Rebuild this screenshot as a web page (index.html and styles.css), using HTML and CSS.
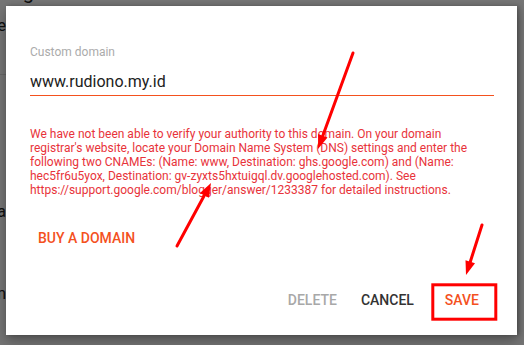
FILE: index.html
```html
<!DOCTYPE html>
<html lang="en">
<head>
    <meta charset="UTF-8">
    <meta name="viewport" content="width=device-width, initial-scale=1.0">
    <title>Custom domain</title>
    <link rel="stylesheet" href="styles.css">
</head>
<body>

    <!-- Page behind the overlay (only edges show) -->
    <div class="page">
        <div class="page-title">Blog</div>
        <div class="page-row page-row-first"><span>Use</span></div>
        <div class="page-rule"></div>
        <div class="page-row page-row-mid"><span>Tea</span></div>
        <div class="page-row page-row-last"><span>Plan</span></div>
    </div>

    <div class="scrim"></div>

    <!-- Dialog -->
    <div class="dialog">
        <div class="field">
            <label class="field-label" for="domain">Custom domain</label>
            <input class="field-input" id="domain" type="text" value="www.rudiono.my.id">
        </div>

        <p class="error-text">We have not been able to verify your authority to this domain. On your domain registrar's website, locate your Domain Name System (DNS) settings and enter the following two CNAMEs: (Name: www, Destination: ghs.google.com) and (Name: hec5fr6u5yox, Destination: gv-zyxts5hxtuigql.dv.googlehosted.com). See https://support.google.com/blogger/answer/1233387 for detailed instructions.</p>

        <div class="buy-row">
            <button class="btn btn-accent">Buy a domain</button>
        </div>

        <div class="actions">
            <button class="btn btn-disabled">Delete</button>
            <button class="btn btn-plain">Cancel</button>
            <button class="btn btn-accent btn-save">Save</button>
        </div>
    </div>

    <!-- Annotation arrows -->
    <svg class="marks" width="524" height="345" viewBox="0 0 524 345">
        <g stroke="#ff0000" stroke-width="3" stroke-linecap="round" fill="none">
            <line x1="353" y1="53" x2="322.8" y2="135.8"/>
            <line x1="177" y1="246" x2="204.4" y2="195.3"/>
            <line x1="482" y1="225" x2="470.3" y2="261.7"/>
            <rect x="432.8" y="284.8" width="63" height="34.4" stroke-linecap="butt"/>
        </g>
        <g fill="#ff0000">
            <polygon points="318,149 327.5,137.5 318.1,134.1"/>
            <polygon points="211,183 208.8,197.7 200,192.9"/>
            <polygon points="466,275 475,263.2 465.5,260.2"/>
        </g>
    </svg>

</body>
</html>
```

FILE: styles.css
```css
html, body {
    margin: 0;
    height: 100%;
    overflow: hidden;
}

body {
    font-family: Roboto, 'Noto Sans', Arial, sans-serif;
    background: #fff;
    position: relative;
}

/* page underneath */
.page {
    color: #222;
    font-size: 16px;
}

.page-title {
    font-size: 20px;
    line-height: 20px;
    margin: -18px 0 0 -6px;
}

.page-row {
    display: flex;
    justify-content: flex-end;
    width: 6px;
    white-space: nowrap;
    line-height: 19px;
}

.page-row-first {
    margin-top: 14px;
}

.page-rule {
    width: 40px;
    height: 1px;
    background: #e0e0e0;
    margin-top: 39px;
}

.page-row-mid {
    margin-top: 127px;
}

.page-row-last {
    margin-top: 63px;
}

.scrim {
    position: absolute;
    inset: 0;
    background: rgba(0, 0, 0, 0.54);
}

/* dialog */
.dialog {
    position: absolute;
    left: 6px;
    top: 6px;
    width: 511px;
    height: 329px;
    box-sizing: border-box;
    background: #fff;
    padding: 39px 23px 0 24px;
    display: flex;
    flex-direction: column;
    box-shadow: 0 6px 12px rgba(0, 0, 0, 0.3), 2px 0 4px rgba(0, 0, 0, 0.25);
}

.field {
    display: flex;
    flex-direction: column;
}

.field-label {
    font-size: 12px;
    line-height: 14px;
    color: #ababab;
}

.field-input {
    margin-top: 11px;
    font-family: inherit;
    font-size: 16px;
    line-height: 20px;
    height: 23px;
    color: #212121;
    border: none;
    border-bottom: 1px solid #f4511e;
    padding: 0 0 2px 0;
    outline: none;
    background: transparent;
}

.error-text {
    margin: 31px 0 0 0;
    font-size: 12px;
    line-height: 14px;
    color: #e8333a;
}

.buy-row {
    margin-top: 23px;
}

.btn {
    font-family: inherit;
    font-size: 14px;
    font-weight: 500;
    text-transform: uppercase;
    line-height: 36px;
    height: 36px;
    padding: 0 8px;
    border: none;
    background: transparent;
    cursor: pointer;
}

.btn-accent {
    color: #f4511e;
}

.btn-plain {
    color: #333;
}

.btn-disabled {
    color: #a8a8a8;
}

.actions {
    margin-top: auto;
    margin-bottom: 17px;
    display: flex;
    justify-content: flex-end;
    gap: 8px;
    padding-right: 7px;
}

.btn-save {
    margin-left: 7px;
}

/* annotation layer */
.marks {
    position: absolute;
    left: 0;
    top: 0;
    pointer-events: none;
}
```
